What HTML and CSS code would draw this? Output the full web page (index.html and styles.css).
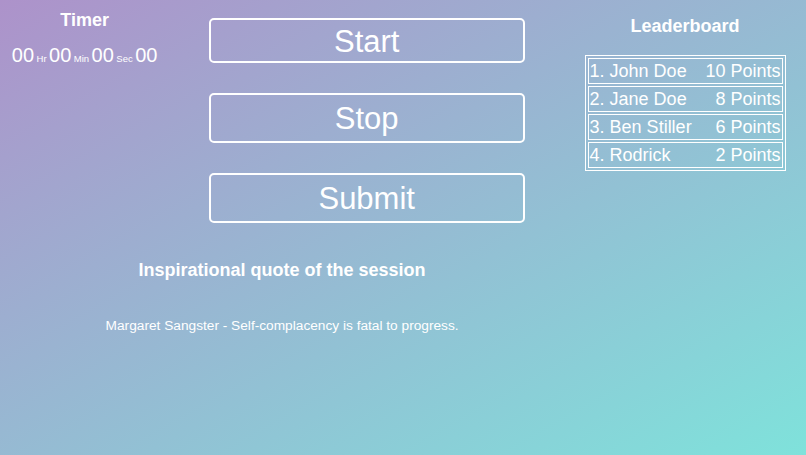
FILE: index.html
```html
<!DOCTYPE html>
<html lang="en">
<head>
<meta charset="utf-8">
<title>Session</title>
<link rel="stylesheet" href="styles.css">
</head>
<body>
<div class="page">
  <div class="main">
    <div class="top">
      <section class="timer">
        <h2 class="title">Timer</h2>
        <div class="clock">00<span class="unit">Hr</span>00<span class="unit">Min</span>00<span class="unit">Sec</span>00</div>
      </section>
      <section class="controls">
        <button class="btn btn-start">Start</button>
        <button class="btn">Stop</button>
        <button class="btn">Submit</button>
      </section>
    </div>
    <section class="quote">
      <h2 class="title">Inspirational quote of the session</h2>
      <p class="quote-text">Margaret Sangster - Self-complacency is fatal to progress.</p>
    </section>
  </div>
  <aside class="board">
    <h2 class="title">Leaderboard</h2>
    <div class="board-list">
      <div class="board-row"><span>1. John Doe</span><span>10 Points</span></div>
      <div class="board-row"><span>2. Jane Doe</span><span>8 Points</span></div>
      <div class="board-row"><span>3. Ben Stiller</span><span>6 Points</span></div>
      <div class="board-row"><span>4. Rodrick</span><span>2 Points</span></div>
    </div>
  </aside>
</div>
</body>
</html>
```

FILE: styles.css
```css
html, body {
  margin: 0;
  padding: 0;
  height: 100%;
}
body {
  font-family: "Liberation Sans", Arial, Helvetica, sans-serif;
  color: #ffffff;
  background: linear-gradient(to bottom right, #ad92ca, #7fe2db);
  background-attachment: fixed;
}
.page {
  display: grid;
  grid-template-columns: 70% 30%;
  min-height: 100vh;
}
.title {
  margin: 0;
  font-size: 18px;
  font-weight: bold;
  line-height: 21px;
  text-align: center;
}
.top {
  display: grid;
  grid-template-columns: 30% 70%;
}
.timer {
  padding-top: 10px;
  text-align: center;
}
.clock {
  margin-top: 13px;
  font-size: 20px;
  line-height: 23px;
  white-space: nowrap;
}
.unit {
  font-size: 9.5px;
  margin: 0 2.5px;
}
.controls {
  display: flex;
  flex-direction: column;
  align-items: center;
  gap: 30px;
  padding-top: 18px;
}
.btn {
  box-sizing: border-box;
  width: 80%;
  height: 50px;
  margin: 0;
  padding: 2px 0 0;
  background: transparent;
  border: 2px solid #ffffff;
  border-radius: 5px;
  color: #ffffff;
  font-family: inherit;
  font-size: 31px;
  line-height: 36px;
}
.btn-start {
  height: 45px;
}
.quote {
  padding-top: 37px;
  text-align: center;
}
.quote-text {
  margin: 37px 0 0;
  font-size: 13.7px;
  line-height: 16px;
}
.board {
  padding-top: 16px;
  display: flex;
  flex-direction: column;
  align-items: center;
}
.board-list {
  margin-top: 18px;
  width: 201px;
  box-sizing: border-box;
  border: 1px solid #ffffff;
  padding: 2px;
  display: flex;
  flex-direction: column;
  gap: 2px;
}
.board-row {
  display: flex;
  justify-content: space-between;
  border: 1px solid #ffffff;
  padding: 1px;
  font-size: 18px;
  line-height: 22px;
  white-space: nowrap;
}
```
